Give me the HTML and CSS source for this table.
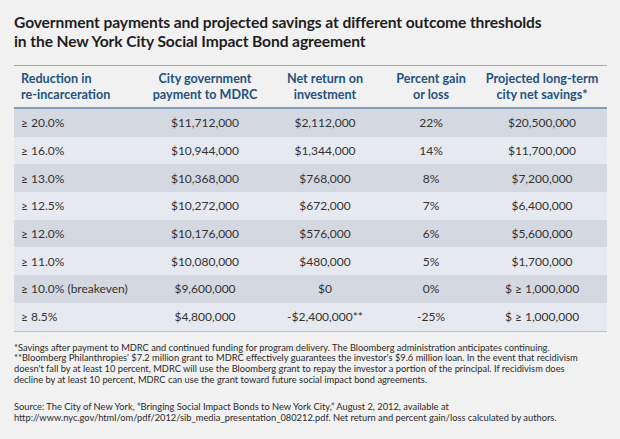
FILE: index.html
```html
<!DOCTYPE html>
<html>
<head>
<meta charset="utf-8">
<link rel="stylesheet" href="styles.css">
</head>
<body>
<div class="chart">
  <h1 class="title">Government payments and projected savings at different outcome thresholds<br>in the New York City Social Impact Bond agreement</h1>
  <table class="data">
    <thead>
      <tr>
        <th class="c1">Reduction in<br>re-incarceration</th>
        <th class="c2">City government<br>payment to MDRC</th>
        <th class="c3">Net return on<br>investment</th>
        <th class="c4">Percent gain<br>or loss</th>
        <th class="c5">Projected long-term<br>city net savings*</th>
      </tr>
    </thead>
    <tbody>
      <tr class="dark"><td class="c1">≥ 20.0%</td><td>$11,712,000</td><td>$2,112,000</td><td>22%</td><td>$20,500,000</td></tr>
      <tr class="light"><td class="c1">≥ 16.0%</td><td>$10,944,000</td><td>$1,344,000</td><td>14%</td><td>$11,700,000</td></tr>
      <tr class="dark"><td class="c1">≥ 13.0%</td><td>$10,368,000</td><td>$768,000</td><td>8%</td><td>$7,200,000</td></tr>
      <tr class="light"><td class="c1">≥ 12.5%</td><td>$10,272,000</td><td>$672,000</td><td>7%</td><td>$6,400,000</td></tr>
      <tr class="dark"><td class="c1">≥ 12.0%</td><td>$10,176,000</td><td>$576,000</td><td>6%</td><td>$5,600,000</td></tr>
      <tr class="light"><td class="c1">≥ 11.0%</td><td>$10,080,000</td><td>$480,000</td><td>5%</td><td>$1,700,000</td></tr>
      <tr class="dark"><td class="c1">≥ 10.0% (breakeven)</td><td>$9,600,000</td><td>$0</td><td>0%</td><td>$ ≥ 1,000,000</td></tr>
      <tr class="light"><td class="c1">≥ 8.5%</td><td>$4,800,000</td><td>-$2,400,000**</td><td>-25%</td><td>$ ≥ 1,000,000</td></tr>
    </tbody>
  </table>
  <p class="note">*Savings after payment to MDRC and continued funding for program delivery. The Bloomberg administration anticipates continuing.<br>**Bloomberg Philanthropies' $7.2 million grant to MDRC effectively guarantees the investor's $9.6 million loan. In the event that recidivism<br>doesn't fall by at least 10 percent, MDRC will use the Bloomberg grant to repay the investor a portion of the principal. If recidivism does<br>decline by at least 10 percent, MDRC can use the grant toward future social impact bond agreements.</p>
  <p class="note source">Source: The City of New York, “Bringing Social Impact Bonds to New York City,” August 2, 2012, available at<br>http://www.nyc.gov/html/om/pdf/2012/sib_media_presentation_080212.pdf. Net return and percent gain/loss calculated by authors.</p>
</div>
</body>
</html>
```
FILE: styles.css
```css
html, body {
  margin: 0;
  padding: 0;
  background: #f1f1f1;
}
.chart {
  width: 620px;
  height: 439px;
  box-sizing: border-box;
  padding: 13px 13px 0 14px;
  font-family: "Lato", "Liberation Sans", sans-serif;
  color: #2b2b2b;
}
.title {
  margin: 0;
  font-size: 15.6px;
  line-height: 19px;
  font-weight: 700;
  color: #1e1e1e;
  letter-spacing: -0.1px;
}
.data {
  margin-top: 14px;
  width: 593px;
  border-collapse: collapse;
  table-layout: fixed;
  font-size: 12px;
}
.data thead tr {
  border-top: 1px solid #93abc3;
  border-bottom: 2px solid #7f9cb8;
}
.data th {
  font-size: 12.6px;
  line-height: 16px;
  font-weight: 700;
  color: #24527f;
  padding: 5px 0 4px;
  text-align: center;
}
.data th.c1 { text-align: left; padding-left: 7px; width: 124px; }
.data th.c2 { width: 120px; }
.data th.c3 { width: 120px; }
.data th.c4 { width: 92px; }
.data th.c5 { width: 130px; }
.data td {
  height: 27.7px;
  padding: 0;
  text-align: center;
  color: #333;
}
.data td.c1 { text-align: left; padding-left: 7px; }
.data tr.dark td { background: #d3d8e1; }
.data tr.light td { background: #e6e9ef; }
.data tbody tr:last-child { border-bottom: 1px solid #a8c2da; }
.note {
  margin: 11px 0 0;
  font-size: 9.3px;
  line-height: 10.7px;
  color: #2a2a2a;
}
.note.source { margin-top: 17px; }
```
